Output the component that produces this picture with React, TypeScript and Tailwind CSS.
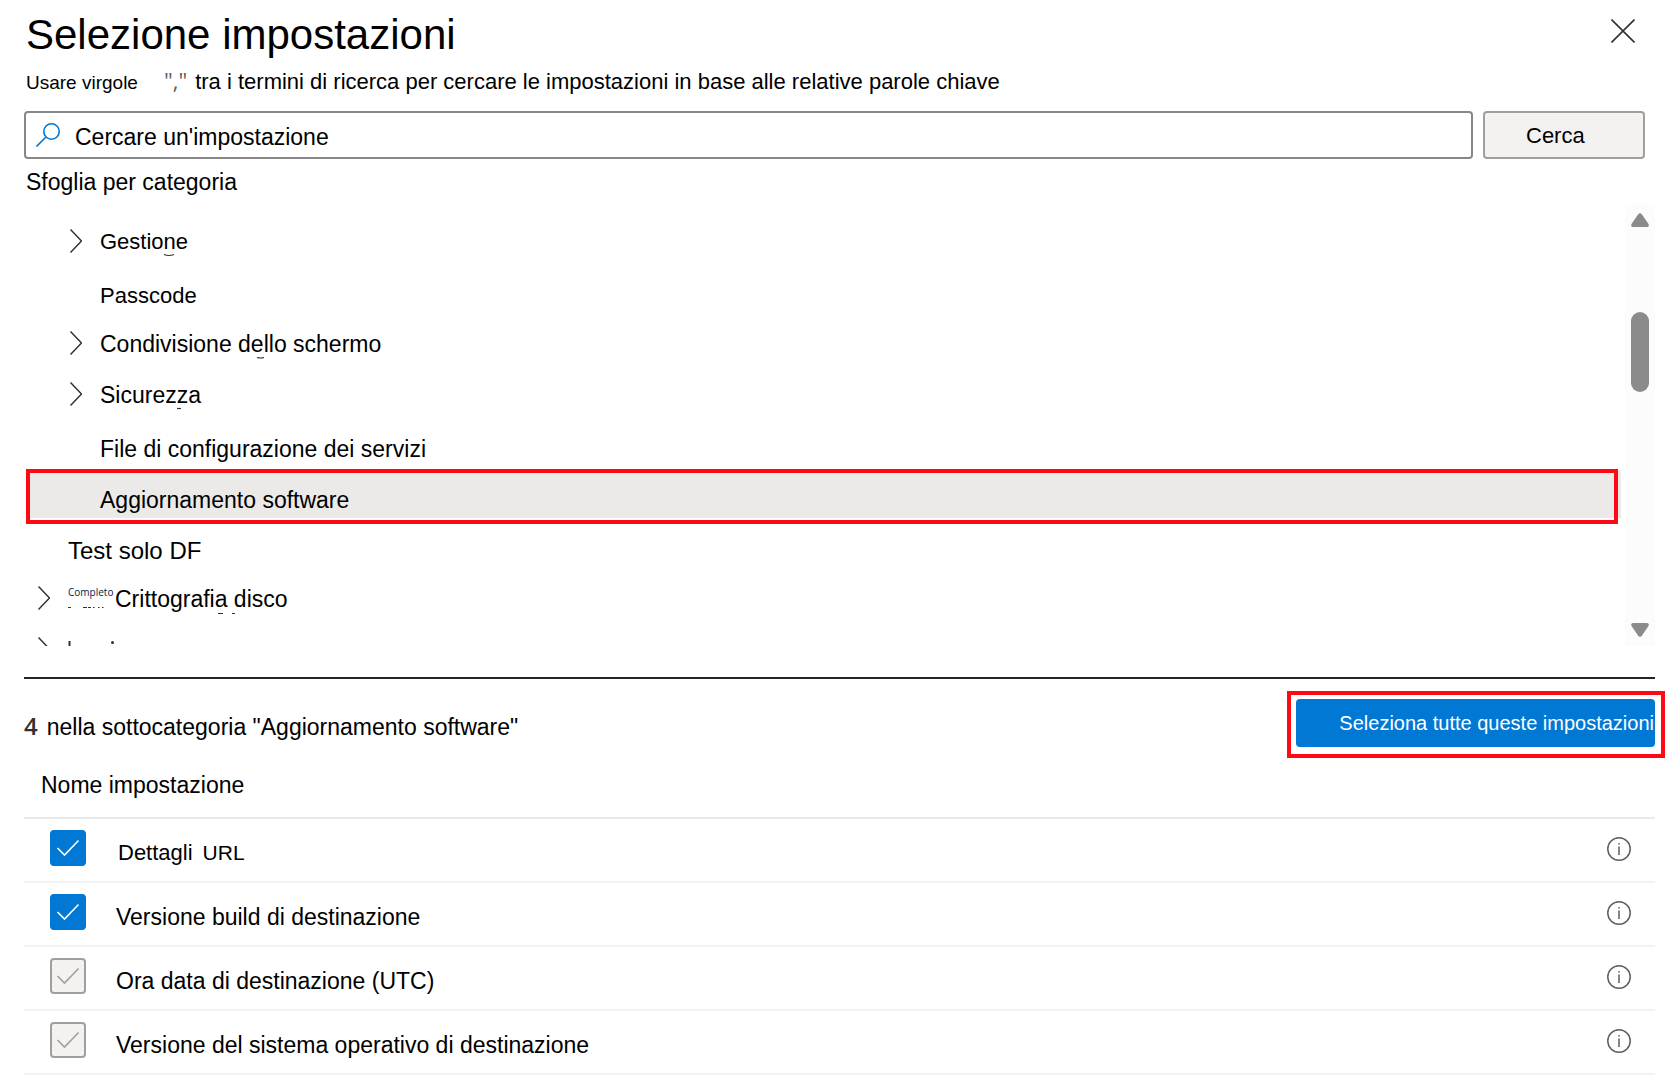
import { useState } from 'react'
import clsx from 'clsx'

type Category = {
  name: string
  level: 0 | 1
  expandable?: boolean
  prefix?: string
  size?: string
  // leftovers of clipped descenders, as svg paths in row coordinates
  marks?: string
}

type Setting = {
  id: string
  name: string
  extra?: string
  locked?: boolean
}

const categories: Category[] = [
  { name: 'Gestione', level: 1, expandable: true, size: 'text-[22px]', marks: 'M138 39.500 Q143 41.500 148 39.500' },
  { name: 'Passcode', level: 1, size: 'text-[22px]' },
  { name: 'Condivisione dello schermo', level: 1, expandable: true, marks: 'M231 40.5 Q234.500 41.500 238 40.5' },
  { name: 'Sicurezza', level: 1, expandable: true, marks: 'M151 40.5 H155' },
  { name: 'File di configurazione dei servizi', level: 1 },
  { name: 'Aggiornamento software', level: 1 },
  { name: 'Test solo DF', level: 0, size: 'text-[24px]' },
  {
    name: 'Crittografia disco',
    level: 0,
    expandable: true,
    prefix: 'Completo',
    marks: 'M42 35.500 h3 M57 35.500 h4 M62 35.500 h3 M67 35.500 h1.500 M72 35.500 h1.500 M76 35.500 h1.500 M192 41.500 h5 M206 41.500 h3',
  },
]

const settings: Setting[] = [
  { id: 'details-url', name: 'Dettagli', extra: 'URL' },
  { id: 'build-version', name: 'Versione build di destinazione' },
  { id: 'date-time', name: 'Ora data di destinazione (UTC)', locked: true },
  { id: 'os-version', name: 'Versione del sistema operativo di destinazione', locked: true },
]

const Chevron = () => (
  <svg className="h-6 w-3 shrink-0" viewBox="0 0 12 24" fill="none" stroke="#323130" strokeWidth="1.5">
    <path d="M0.5 0.5 L11.500 12 L0.5 23.500" />
  </svg>
)

const InfoIcon = () => (
  <svg className="size-6" viewBox="0 0 24 24" fill="none" stroke="#605e5c" strokeWidth="1.5">
    <circle cx="12" cy="12" r="11.2" />
    <path d="M12 9.500 V18 M12 6 V7.500" />
  </svg>
)

const CategoryRow = ({ item, selected, onSelect }: { item: Category; selected: boolean; onSelect: () => void }) => (
  <li className={clsx('relative', selected ? 'mb-[3px] h-12 bg-[#ebeae9]' : 'h-[51px]')}>
    <button
      type="button"
      onClick={onSelect}
      className={clsx('flex h-full w-full items-center text-left', item.level === 1 ? 'pl-11' : 'pl-3')}
    >
      <span className="w-[30px] shrink-0">{item.expandable && <Chevron />}</span>
      {item.prefix && (
        <span className="mb-3 w-[47px] shrink-0 font-['Open_Sans',sans-serif] text-[10px] leading-3 text-[#00234a]">
          {item.prefix}
        </span>
      )}
      <span
        className={clsx(
          'whitespace-nowrap',
          item.size,
          selected ? 'pt-3' : item.expandable ? 'pt-[2px]' : 'pt-2',
        )}
      >
        {item.name}
      </span>
    </button>
    {item.marks && (
      <svg className="pointer-events-none absolute top-0 left-0 h-[51px] w-[300px]" fill="none" stroke="#323130" strokeWidth="1.2">
        <path d={item.marks} />
      </svg>
    )}
    {selected && (
      <span className="pointer-events-none absolute -top-px right-[3px] -bottom-[6px] left-0 border-4 border-[#ff0a14]" />
    )}
  </li>
)

const ScrollTrack = () => (
  <div className="flex w-[30px] shrink-0 flex-col items-center bg-[#fcfcfc] py-[9px]">
    <svg className="h-[14px] w-[18px]" viewBox="0 0 18 14" fill="#8b8b8b">
      <path d="M7 1.500 Q9 -1 11 1.500 L17.500 11 Q18.500 14 16 14 H2 Q-0.5 14 0.5 11 Z" />
    </svg>
    <div className="mt-[85px] h-20 w-[18px] rounded-full bg-[#8b8b8b]" />
    <svg className="mt-auto h-[14px] w-[18px]" viewBox="0 0 18 14" fill="#8b8b8b">
      <path d="M7 12.500 Q9 15 11 12.500 L17.500 3 Q18.500 0 16 0 H2 Q-0.5 0 0.5 3 Z" />
    </svg>
  </div>
)

const SettingRow = ({ item, checked, onToggle }: { item: Setting; checked: boolean; onToggle: () => void }) => (
  <tr className="h-16 border-b-2 border-[#f3f2f1]">
    <td className="w-[92px] pb-1 pl-[26px] align-middle">
      <span className="relative block size-9">
        <input
          id={item.id}
          type="checkbox"
          checked={checked}
          disabled={item.locked}
          onChange={onToggle}
          className="block size-9 appearance-none rounded-[4px] border-2 border-[#a19f9d] checked:border-[#0078d4] checked:bg-[#0078d4] disabled:border-[#a19f9d] disabled:bg-[#f3f2f1]"
        />
        {checked && (
          <svg
            className={clsx('pointer-events-none absolute inset-0', item.locked ? 'text-[#a19f9d]' : 'text-white')}
            viewBox="0 0 36 36"
            fill="none"
            stroke="currentColor"
            strokeWidth="1.6"
          >
            <path d="M7.500 18 L14.500 25 L28.500 10.500" />
          </svg>
        )}
      </span>
    </td>
    <td className="pt-[6px] align-middle">
      <label htmlFor={item.id} className={clsx('flex gap-[10px]', item.extra && 'pl-[2px] text-[22px]')}>
        {item.name}
        {item.extra && <span className="text-[21px]">{item.extra}</span>}
      </label>
    </td>
    <td className="w-12 pb-[2px] align-middle">
      <button type="button" aria-label="Info" className="block">
        <InfoIcon />
      </button>
    </td>
  </tr>
)

export default function App() {
  const [selected, setSelected] = useState('Aggiornamento software')
  const [checked, setChecked] = useState<string[]>(settings.map((s) => s.id))

  const toggle = (id: string) =>
    setChecked((prev) => (prev.includes(id) ? prev.filter((c) => c !== id) : [...prev, id]))

  return (
    <main className="min-h-screen bg-white pt-[11px] pr-[21px] pl-6 font-['Liberation_Sans',Arial,sans-serif] text-[23px] leading-8 text-black">
      <header className="flex items-start justify-between pr-5 pl-[2px]">
        <h1 className="text-[42px] leading-[48px]">Selezione impostazioni</h1>
        <button type="button" aria-label="Chiudi" className="mt-2">
          <svg className="size-6" viewBox="0 0 24 24" fill="none" stroke="#323130" strokeWidth="1.6">
            <path d="M0.5 0.5 L23.500 23.500 M23.500 0.5 L0.5 23.500" />
          </svg>
        </button>
      </header>

      <p className="mt-[7px] flex h-8 items-baseline pl-[2px] text-[22px] whitespace-nowrap">
        <span className="text-[19px]">Usare virgole</span>
        <span className="ml-[26px] font-['Open_Sans',sans-serif] text-[22px] leading-6 text-[#605e5c]">","</span>
        <span className="ml-2">tra i termini di ricerca per cercare le impostazioni in base alle relative parole chiave</span>
      </p>

      <form className="mt-[13px] flex gap-[10px] pr-[10px]" onSubmit={(e) => e.preventDefault()}>
        <label className="flex h-12 flex-1 items-center gap-[15px] rounded-[4px] border-2 border-[#8a8886] pl-[10px]">
          <svg className="size-6 shrink-0" viewBox="0 0 24 24" fill="none" stroke="#0078d4" strokeWidth="1.6">
            <circle cx="15.500" cy="8.500" r="7.700" />
            <path d="M10 14 L0.5 23.500" />
          </svg>
          <input
            type="text"
            aria-label="Cercare un'impostazione"
            placeholder="Cercare un'impostazione"
            className="h-full flex-1 bg-transparent pt-1 outline-none placeholder:text-black"
          />
        </label>
        <button
          type="submit"
          className="h-12 w-[162px] rounded-[4px] border-2 border-[#a19f9d] bg-[#f3f2f1] pt-[2px] pl-[41px] text-left text-[22px]"
        >
          Cerca
        </button>
      </form>

      <h2 className="mt-[7px] pl-[2px]">Sfoglia per categoria</h2>

      <section className="mt-[6px] flex h-[442px] gap-1 overflow-hidden">
        <ul className="ml-[2px] flex-1 pt-[11px]">
          {categories.map((item) => (
            <CategoryRow
              key={item.name}
              item={item}
              selected={item.name === selected}
              onSelect={() => setSelected(item.name)}
            />
          ))}
          {/* next row, only its top edge shows above the fold */}
          <li className="flex h-[51px] items-center pl-3">
            <Chevron />
            <svg className="ml-[18px] h-4 w-12" viewBox="0 0 48 16" fill="#323130">
              <path d="M0.5 0 h2 v16 h-2 Z" />
              <circle cx="44.500" cy="1.500" r="1.500" />
            </svg>
          </li>
        </ul>
        <ScrollTrack />
      </section>

      <section className="mt-[31px] border-t-2 border-[#252423]">
        <div className="flex items-start justify-between">
          <p className="flex items-baseline gap-[9px] pt-[31px]">
            <span className="font-['Open_Sans',sans-serif] text-[24px] leading-8 font-semibold text-[#323130]">4</span>
            <span>nella sottocategoria "Aggiornamento software"</span>
          </p>
          <div className="-mr-[10px] mt-3 border-4 border-[#ff0a14] py-1 pr-[6px] pl-[5px]">
            <button
              type="button"
              onClick={() => setChecked(settings.map((s) => s.id))}
              className="mb-[3px] block h-12 rounded-[4px] bg-[#0078d4] pr-px pl-[43px] text-[20px] whitespace-nowrap text-white"
            >
              Seleziona tutte queste impostazioni
            </button>
          </div>
        </div>

        <table className="w-full border-collapse">
          <thead>
            <tr className="h-[60px] border-b-2 border-[#eaeaea]">
              <th colSpan={3} className="pb-[6px] pl-[17px] text-left align-middle font-normal">
                Nome impostazione
              </th>
            </tr>
          </thead>
          <tbody>
            {settings.map((item) => (
              <SettingRow
                key={item.id}
                item={item}
                checked={checked.includes(item.id)}
                onToggle={() => toggle(item.id)}
              />
            ))}
          </tbody>
        </table>
      </section>
    </main>
  )
}
